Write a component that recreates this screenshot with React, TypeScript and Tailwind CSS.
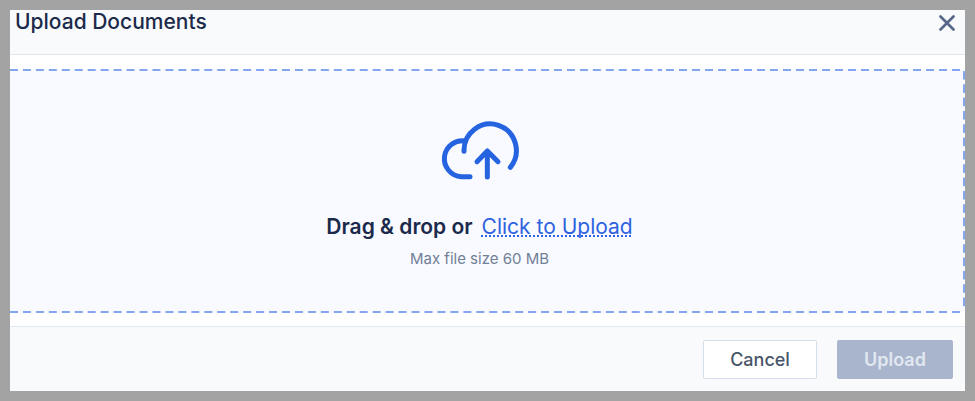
import { useId, useState } from 'react';

function CloudUploadIcon() {
  return (
    <svg
      aria-hidden="true"
      viewBox="60 45 240 180"
      className="h-15 w-20 text-[#2563e0]"
      fill="none"
      stroke="currentColor"
      strokeWidth="15"
      strokeLinecap="round"
      strokeLinejoin="round"
    >
      <path d="M150 212 H124 A54 54 0 1 1 137 105" />
      <path d="M132 136 A78.500 79.500 0 1 1 271 184" />
      <path d="M202 213 V135 M171 167 L202 135 L234 167" />
    </svg>
  );
}

function CloseIcon() {
  return (
    <svg
      aria-hidden="true"
      viewBox="0 0 16 16"
      className="size-4"
      fill="none"
      stroke="currentColor"
      strokeWidth="2.700"
      strokeLinecap="round"
    >
      <path d="M1.500 1.500 L14.500 14.500 M14.500 1.500 L1.500 14.500" />
    </svg>
  );
}

const dashes =
  'h-full bg-[linear-gradient(90deg,#84a6ee_0_62%,transparent_62%)] bg-size-[13px_100%] bg-repeat-round';

function DashedLine() {
  return (
    <div className="flex h-[2px]">
      <div className={`${dashes} flex-13`} />
      <div className="mr-1 w-1 bg-[#84a6ee]" />
      <div className={`${dashes} flex-6`} />
    </div>
  );
}

function DropZone() {
  const inputId = useId();
  const [fileName, setFileName] = useState('');

  return (
    <div className="overflow-hidden rounded-r-sm bg-[#f8faff]">
      <DashedLine />
      <div className="flex">
        <div className="flex flex-1 flex-col items-center pt-[50px] pr-[14px] pb-10">
          <CloudUploadIcon />
          <p className="mt-[31px] flex gap-[9px] text-[21px] leading-[30px] font-semibold text-[#1b2a4a]">
            Drag &amp; drop or
            <label
              htmlFor={inputId}
              className="cursor-pointer font-normal text-[#2f62e0] underline decoration-dotted decoration-2 underline-offset-1 [text-decoration-skip-ink:none]"
            >
              Click to Upload
            </label>
          </p>
          <input
            id={inputId}
            type="file"
            className="sr-only"
            onChange={(e) => setFileName(e.target.files?.[0]?.name ?? '')}
          />
          <p className="mt-[5px] text-[15px] leading-6 text-[#718096]">{fileName || 'Max file size 60 MB'}</p>
        </div>
        <div className="w-[2px] bg-[linear-gradient(180deg,#84a6ee_0_62%,transparent_62%)] bg-size-[100%_13px] bg-repeat-round" />
      </div>
      <DashedLine />
    </div>
  );
}

export default function App() {
  return (
    <div className="min-h-screen bg-[#a3a3a3] p-[10px] font-['Inter',sans-serif]">
      <section className="bg-white">
        <header className="flex h-[45px] items-start justify-between border-b border-[#e2e8f0] bg-[#f9fafc] pr-[10px] pl-[5px]">
          <h1 className="text-[21px] leading-6 font-medium text-[#1b2a4a]">Upload Documents</h1>
          <button type="button" aria-label="Close" className="mt-[5px] text-[#56678a]">
            <CloseIcon />
          </button>
        </header>
        <div className="pt-[14px] pb-[13px]">
          <DropZone />
        </div>
        <footer className="flex justify-end gap-5 border-t border-[#e2e8f0] bg-[#f9fafc] px-3 pt-[13px] pb-3">
          <button
            type="button"
            className="h-[39px] w-[114px] rounded-xs border border-[#d5deed] bg-white text-lg font-medium text-[#475569]"
          >
            Cancel
          </button>
          <button
            type="button"
            disabled
            className="h-[39px] w-[116px] rounded-xs bg-[#a9b5cd] text-lg font-semibold text-[#e2e8f0]"
          >
            Upload
          </button>
        </footer>
      </section>
    </div>
  );
}
